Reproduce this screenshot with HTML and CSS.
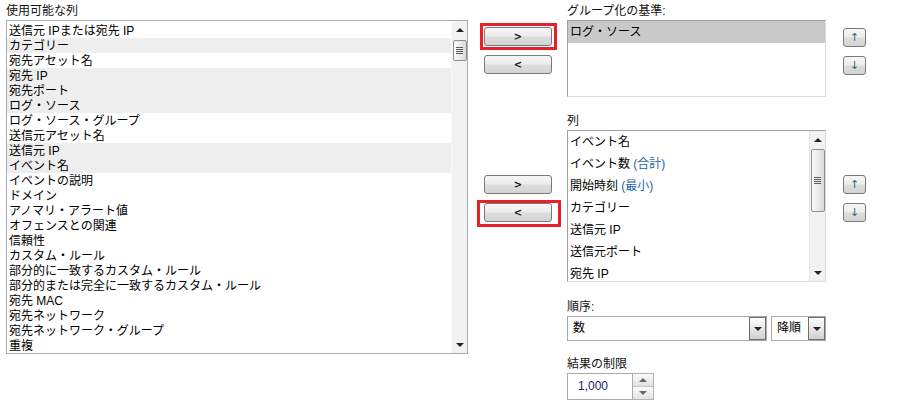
FILE: index.html
```html
<!DOCTYPE html>
<html lang="ja">
<head>
    <meta charset="UTF-8">
    <title>列の選択</title>
    <link rel="stylesheet" href="styles.css">
</head>
<body>
    <div class="page">
        <div class="avail">
            <div class="lbl">使用可能な列</div>
            <div class="listbox">
                <ul class="items">
                    <li>送信元 IPまたは宛先 IP</li>
                    <li class="used">カテゴリー</li>
                    <li>宛先アセット名</li>
                    <li class="used">宛先 IP</li>
                    <li class="used">宛先ポート</li>
                    <li class="used">ログ・ソース</li>
                    <li>ログ・ソース・グループ</li>
                    <li>送信元アセット名</li>
                    <li class="used">送信元 IP</li>
                    <li class="used">イベント名</li>
                    <li>イベントの説明</li>
                    <li>ドメイン</li>
                    <li>アノマリ・アラート値</li>
                    <li>オフェンスとの関連</li>
                    <li>信頼性</li>
                    <li>カスタム・ルール</li>
                    <li>部分的に一致するカスタム・ルール</li>
                    <li>部分的または完全に一致するカスタム・ルール</li>
                    <li>宛先 MAC</li>
                    <li>宛先ネットワーク</li>
                    <li>宛先ネットワーク・グループ</li>
                    <li>重複</li>
                </ul>
                <div class="sbar">
                    <span class="sb-up"><i class="tri-up"></i></span>
                    <span class="thumb"><i class="grip"></i></span>
                    <span class="sb-fill"></span>
                    <span class="sb-down"><i class="tri-down"></i></span>
                </div>
            </div>
        </div>

        <div class="moves">
            <div class="hl hl-1"><button class="btn">&gt;</button></div>
            <button class="btn btn-2">&lt;</button>
            <button class="btn btn-3">&gt;</button>
            <div class="hl hl-2"><button class="btn">&lt;</button></div>
        </div>

        <div class="config">
            <div class="lbl">グループ化の基準:</div>
            <div class="box group">
                <ul class="rows">
                    <li class="sel">ログ・ソース</li>
                </ul>
            </div>

            <div class="lbl lbl-gap">列</div>
            <div class="box cols">
                <ul class="rows">
                    <li>イベント名</li>
                    <li>イベント数 <span class="agg">(合計)</span></li>
                    <li>開始時刻 <span class="agg">(最小)</span></li>
                    <li>カテゴリー</li>
                    <li>送信元 IP</li>
                    <li>送信元ポート</li>
                    <li>宛先 IP</li>
                </ul>
                <div class="sbar">
                    <span class="sb-up"><i class="tri-up"></i></span>
                    <span class="thumb thumb-tall"><i class="grip"></i></span>
                    <span class="sb-fill"></span>
                    <span class="sb-down"><i class="tri-down"></i></span>
                </div>
            </div>

            <div class="lbl lbl-order">順序:</div>
            <div class="order-row">
                <div class="select sel-field">
                    <span class="val">数</span>
                    <span class="arr"><i class="tri-down"></i></span>
                </div>
                <div class="select sel-dir">
                    <span class="val">降順</span>
                    <span class="arr"><i class="tri-down"></i></span>
                </div>
            </div>

            <div class="lbl lbl-limit">結果の制限</div>
            <div class="spin">
                <span class="spin-val">1,000</span>
                <span class="spin-btns">
                    <span class="spin-b"><i class="tri-up small"></i></span>
                    <span class="spin-b"><i class="tri-down small"></i></span>
                </span>
            </div>
        </div>

        <div class="orders">
            <button class="mv mv-1">↑</button>
            <button class="mv mv-2">↓</button>
            <button class="mv mv-3">↑</button>
            <button class="mv mv-2">↓</button>
        </div>
    </div>
</body>
</html>
```

FILE: styles.css
```css
* {
    margin: 0;
    padding: 0;
    box-sizing: border-box;
}
body {
    font: 12px "Liberation Sans", "Noto Sans CJK JP", sans-serif;
    color: #000;
    background: #fff;
}
.page {
    display: flex;
    align-items: flex-start;
    padding: 3px 0 0 6px;
}
.lbl {
    height: 17px;
    line-height: 17px;
    white-space: nowrap;
    color: #111;
}

/* available columns */
.avail {
    width: 462px;
}
.listbox {
    display: flex;
    height: 334px;
    border: 1px solid #a6acb6;
    background: #fff;
}
.items {
    flex: 1;
    list-style: none;
    padding-top: 2px;
    overflow: hidden;
}
.items li {
    height: 15px;
    line-height: 17px;
    padding-left: 2px;
    white-space: nowrap;
}
.items li.used {
    background: #eeeeee;
}

/* scrollbars */
.sbar {
    display: flex;
    flex-direction: column;
    align-items: center;
    width: 16px;
    background: #f2f2f2;
    border-left: 1px solid #f8f8f8;
}
.sb-up,
.sb-down {
    display: flex;
    align-items: center;
    justify-content: center;
    width: 100%;
    height: 17px;
}
.sb-fill {
    flex: 1;
}
.thumb {
    display: flex;
    align-items: center;
    justify-content: center;
    width: 14px;
    height: 21px;
    margin-top: 2px;
    border: 1px solid #8e8e8e;
    border-radius: 2px;
    background: linear-gradient(to right, #fbfbfb, #dadada);
}
.thumb-tall {
    height: 63px;
    margin-top: 1px;
}
.grip {
    width: 7px;
    height: 7px;
    background: repeating-linear-gradient(#5a5a5a 0 1px, transparent 1px 2px);
}
.tri-up,
.tri-down {
    width: 0;
    height: 0;
    border-left: 4px solid transparent;
    border-right: 4px solid transparent;
}
.tri-up {
    border-bottom: 4px solid #222;
}
.tri-down {
    border-top: 4px solid #222;
}
.tri-up.small {
    border-bottom-color: #666;
}
.tri-down.small {
    border-top-color: #666;
}

/* move buttons */
.moves {
    display: flex;
    flex-direction: column;
    align-items: flex-start;
    width: 99px;
}
.btn,
.mv {
    display: block;
    width: 68px;
    height: 19px;
    border: 1px solid #7a7a7a;
    border-radius: 3px;
    background: linear-gradient(#f6f6f6 0%, #ececec 48%, #dddddd 52%, #d4d4d4 100%);
    font: 700 10px/17px "DejaVu Sans", sans-serif;
    color: #222;
    text-align: center;
}
.hl {
    border: 3px solid #e8202a;
}
.hl-1 {
    margin: 20px 0 0 12px;
    padding: 1px 2px 1px 1px;
}
.btn-2 {
    margin: 5px 0 0 16px;
}
.btn-3 {
    margin: 101px 0 0 16px;
}
.hl-2 {
    margin: 6px 0 0 9px;
    padding: 0 6px 2px 4px;
}

/* right side */
.config {
    width: 259px;
}
.box {
    display: flex;
    border: 1px solid;
    border-color: #a0a0a0 #dcdcdc #dcdcdc #a0a0a0;
    background: #fff;
}
.group {
    height: 77px;
}
.cols {
    height: 152px;
}
.cols .sbar {
    border-left: 1px solid #e6e6e6;
}
.rows {
    flex: 1;
    list-style: none;
    overflow: hidden;
}
.rows li {
    height: 22px;
    line-height: 23px;
    padding-left: 2px;
    white-space: nowrap;
}
.rows li.sel {
    background: #c9c9c9;
}
.agg {
    color: #1c64a8;
}
.lbl-gap {
    margin-top: 16px;
}
.lbl-order {
    margin-top: 17px;
}
.lbl-limit {
    margin-top: 15px;
}
.order-row {
    display: flex;
    gap: 4px;
}
.select {
    display: flex;
    height: 25px;
    border: 1px solid #a9a9a9;
    background: #fff;
}
.sel-field {
    width: 200px;
}
.sel-dir {
    width: 55px;
}
.select .val {
    flex: 1;
    padding-left: 5px;
    line-height: 23px;
}
.select .arr {
    display: flex;
    align-items: center;
    justify-content: center;
    width: 17px;
    border: 1px solid #6e6e6e;
    background: linear-gradient(#fdfdfd, #d0d0d0);
}
.spin {
    display: flex;
    width: 87px;
    height: 27px;
}
.spin-val {
    width: 66px;
    padding-left: 10px;
    line-height: 25px;
    border: 1px solid #aaaaaa;
    color: #1d2466;
}
.spin-btns {
    display: flex;
    flex-direction: column;
    width: 21px;
    border: 1px solid #b4b4b4;
    border-left: 0;
}
.spin-b {
    display: flex;
    flex: 1;
    align-items: center;
    justify-content: center;
    background: linear-gradient(#fbfbfb, #e2e2e2);
}
.spin-b + .spin-b {
    border-top: 1px solid #c4c4c4;
}

/* reorder buttons */
.orders {
    display: flex;
    flex-direction: column;
    margin-left: 17px;
}
.mv {
    width: 23px;
    font: 11px/17px "DejaVu Sans", sans-serif;
    color: #2a6f73;
}
.mv-1 {
    margin-top: 25px;
}
.mv-2 {
    margin-top: 9px;
}
.mv-3 {
    margin-top: 100px;
}
```
